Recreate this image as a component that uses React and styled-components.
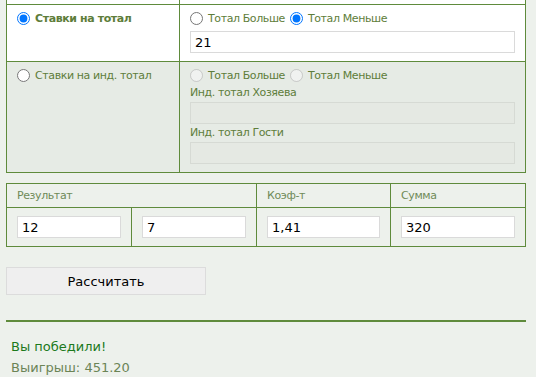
import React, { useState } from "react";
import styled, { createGlobalStyle } from "styled-components";

const GREEN_LINE = "#5f8b3c";
const TEXT = "#5e7d3a";
const FONT = `"DejaVu Sans", Verdana, sans-serif`;

const GlobalStyle = createGlobalStyle`
  html, body {
    margin: 0;
    padding: 0;
    background: #edf1ec;
    font-family: ${FONT};
  }
`;

const Page = styled.div`
  width: 520px;
  padding-left: 6px;
  overflow: hidden;
  height: 377px;
`;

const BetTable = styled.div`
  display: grid;
  grid-template-columns: 173px 346px;
  border-left: 1px solid ${GREEN_LINE};
`;

const Cell = styled.div`
  box-sizing: border-box;
  border-right: 1px solid ${GREEN_LINE};
  border-bottom: 1px solid ${GREEN_LINE};
  background: ${(p) => (p.$muted ? "#e6ebe5" : "#ffffff")};
  padding: ${(p) => (p.$stub ? "0" : "4px 10px 8px")};
  height: ${(p) => (p.$stub ? "5px" : "auto")};
`;

const RadioLine = styled.label`
  display: flex;
  align-items: center;
  height: 18px;
  font-size: 11px;
  letter-spacing: -0.4px;
  color: ${TEXT};
  font-weight: ${(p) => (p.$bold ? "bold" : "normal")};
  white-space: nowrap;
`;

const Radio = styled.input.attrs({ type: "radio" })`
  width: 13px;
  height: 13px;
  margin: 0 5px 0 0;
`;

const Option = styled.span`
  display: inline-flex;
  align-items: center;
  margin-right: 5px;
`;

const FieldLabel = styled.div`
  height: 18px;
  line-height: 18px;
  font-size: 11px;
  letter-spacing: -0.4px;
  color: ${TEXT};
`;

const TextInput = styled.input`
  display: block;
  box-sizing: border-box;
  width: 100%;
  height: 22px;
  margin: 0;
  padding: 0 4px;
  font-family: ${FONT};
  font-size: 13px;
  color: #000;
  background: #ffffff;
  border: 1px solid #dadada;
  outline: none;
  margin-top: ${(p) => (p.$gap ? "4px" : "0")};

  &:disabled {
    background: #e5e9e3;
    border-color: #d6dad4;
  }
`;

const ResultTable = styled.div`
  margin-top: 10px;
  display: grid;
  grid-template-columns: 125px 125px 134px 135px;
  border-left: 1px solid ${GREEN_LINE};
  border-top: 1px solid ${GREEN_LINE};
`;

const HeadCell = styled.div`
  box-sizing: border-box;
  grid-column: span ${(p) => p.$span || 1};
  border-right: 1px solid ${GREEN_LINE};
  border-bottom: 1px solid ${GREEN_LINE};
  padding: 4px 10px;
  line-height: 15px;
  font-size: 11px;
  letter-spacing: -0.4px;
  color: #6f8a58;
`;

const ValueCell = styled.div`
  box-sizing: border-box;
  border-right: 1px solid ${GREEN_LINE};
  border-bottom: 1px solid ${GREEN_LINE};
  padding: 8px 10px;
`;

const CalcButton = styled.button`
  display: block;
  margin-top: 20px;
  width: 200px;
  height: 28px;
  background: #efefef;
  border: 1px solid #dcdcdc;
  font-family: ${FONT};
  font-size: 13px;
  color: #000;
  cursor: pointer;
`;

const Divider = styled.div`
  margin-top: 25px;
  height: 2px;
  background: ${GREEN_LINE};
`;

const Outcome = styled.div`
  padding: 14px 5px 0;
  font-size: 13px;
  line-height: 21px;
`;

const Line = styled.div`
  color: ${(p) => (p.$win ? "#1c7a1c" : "#6b8456")};
`;

export default function App() {
  const [mode, setMode] = useState("total");
  const [side, setSide] = useState("under");

  return (
    <Page>
      <GlobalStyle />
      <BetTable>
        <Cell $stub />
        <Cell $stub />

        <Cell>
          <RadioLine $bold>
            <Radio
              name="mode"
              checked={mode === "total"}
              onChange={() => setMode("total")}
            />
            Ставки на тотал
          </RadioLine>
        </Cell>
        <Cell>
          <RadioLine as="div">
            <Option>
              <Radio
                name="side"
                checked={side === "over"}
                onChange={() => setSide("over")}
              />
              Тотал Больше
            </Option>
            <Option>
              <Radio
                name="side"
                checked={side === "under"}
                onChange={() => setSide("under")}
              />
              Тотал Меньше
            </Option>
          </RadioLine>
          <TextInput $gap defaultValue="21" />
        </Cell>

        <Cell $muted>
          <RadioLine>
            <Radio
              name="mode"
              checked={mode === "ind"}
              onChange={() => setMode("ind")}
            />
            Ставки на инд. тотал
          </RadioLine>
        </Cell>
        <Cell $muted>
          <RadioLine as="div">
            <Option>
              <Radio name="indside" disabled />
              Тотал Больше
            </Option>
            <Option>
              <Radio name="indside" disabled />
              Тотал Меньше
            </Option>
          </RadioLine>
          <FieldLabel>Инд. тотал Хозяева</FieldLabel>
          <TextInput disabled />
          <FieldLabel>Инд. тотал Гости</FieldLabel>
          <TextInput disabled />
        </Cell>
      </BetTable>

      <ResultTable>
        <HeadCell $span={2}>Результат</HeadCell>
        <HeadCell>Коэф-т</HeadCell>
        <HeadCell>Сумма</HeadCell>
        <ValueCell>
          <TextInput defaultValue="12" />
        </ValueCell>
        <ValueCell>
          <TextInput defaultValue="7" />
        </ValueCell>
        <ValueCell>
          <TextInput defaultValue="1,41" />
        </ValueCell>
        <ValueCell>
          <TextInput defaultValue="320" />
        </ValueCell>
      </ResultTable>

      <CalcButton>Рассчитать</CalcButton>
      <Divider />
      <Outcome>
        <Line $win>Вы победили!</Line>
        <Line>Выигрыш: 451.20</Line>
      </Outcome>
    </Page>
  );
}
